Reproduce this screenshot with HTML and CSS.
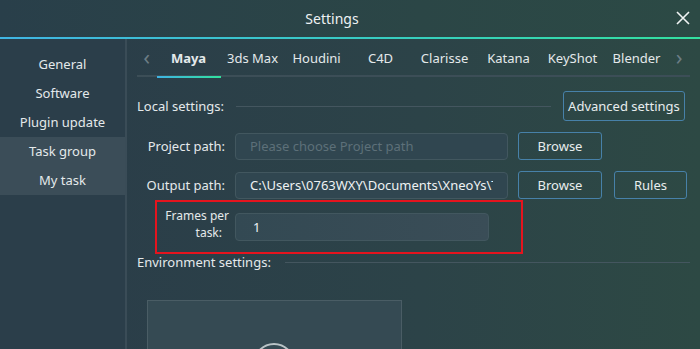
FILE: index.html
```html
<!DOCTYPE html>
<html lang="en">
<head>
    <meta charset="UTF-8">
    <title>Settings</title>
    <link rel="stylesheet" href="styles.css">
</head>
<body>
    <div class="titlebar">
        <span class="title">Settings</span>
        <svg class="close" width="14" height="14" viewBox="0 0 14 14">
            <path d="M1 1 L13 13 M13 1 L1 13" stroke="#f0f3f3" stroke-width="1.6" fill="none"/>
        </svg>
    </div>
    <div class="accent"></div>
    <div class="window">
        <ul class="sidebar">
            <li>General</li>
            <li>Software</li>
            <li>Plugin update</li>
            <li class="active">Task group</li>
            <li class="active">My task</li>
        </ul>
        <div class="main">
            <div class="tabs">
                <span class="arrow">&#x2039;</span>
                <span class="tab selected">Maya</span>
                <span class="tab">3ds Max</span>
                <span class="tab">Houdini</span>
                <span class="tab">C4D</span>
                <span class="tab">Clarisse</span>
                <span class="tab">Katana</span>
                <span class="tab">KeyShot</span>
                <span class="tab">Blender</span>
                <span class="arrow">&#x203A;</span>
            </div>
            <div class="section local">
                <span class="section-title">Local settings:</span>
                <span class="rule short"></span>
                <button class="btn advanced">Advanced settings</button>
            </div>
            <div class="row">
                <label class="label">Project path:</label>
                <input class="field" placeholder="Please choose Project path">
                <button class="btn browse">Browse</button>
            </div>
            <div class="row">
                <label class="label">Output path:</label>
                <input class="field" value="C:\Users\0763WXY\Documents\XneoYs\Task">
                <button class="btn browse">Browse</button>
                <button class="btn rules">Rules</button>
            </div>
            <div class="highlight">
                <label class="label">Frames per<br><span class="tail">task:</span></label>
                <input class="field frames" value="1">
            </div>
            <div class="section env">
                <span class="section-title">Environment settings:</span>
                <span class="rule"></span>
            </div>
            <div class="preview">
                <div class="ring"></div>
            </div>
        </div>
    </div>
</body>
</html>
```

FILE: styles.css
```css
* {
    box-sizing: border-box;
}
html, body {
    margin: 0;
    height: 100%;
    overflow: hidden;
}
body {
    font-family: "Noto Sans", "Open Sans", sans-serif;
    font-size: 13px;
    color: #e4e9eb;
    background: linear-gradient(90deg, #2a3c49 0%, #2c4348 60%, #2d4944 100%);
}
.titlebar {
    height: 37px;
    display: flex;
    align-items: center;
    justify-content: center;
    padding-right: 36px;
    position: relative;
    background: linear-gradient(90deg, #293f4a 0%, #2b4646 60%, #2c4a45 100%);
}
.title {
    font-size: 14px;
    color: #eef2f3;
}
.close {
    position: absolute;
    right: 10px;
    top: 11px;
}
.accent {
    height: 2px;
    background: linear-gradient(90deg, #40b5e3 0%, #38cbc4 50%, #33e0a0 100%);
}
.window {
    display: flex;
    height: calc(100% - 39px);
}
.sidebar {
    list-style: none;
    margin: 0;
    padding: 11px 0 0;
    width: 127px;
    background: #2b3e4a;
    border-right: 2px solid #3a4c57;
}
.sidebar li {
    height: 29px;
    line-height: 29px;
    text-align: center;
}
.sidebar li.active {
    background: #3b4d58;
}
.main {
    flex: 1;
    padding: 0 10px;
    overflow: hidden;
}
.tabs {
    display: flex;
    align-items: center;
    height: 38px;
    border-bottom: 2px solid #3c4e57;
    padding-top: 2px;
    white-space: nowrap;
}
.arrow {
    font-size: 22px;
    color: #6c7d85;
    width: 20px;
    text-align: center;
    margin-top: -4px;
}
.tabs .arrow:last-child {
    width: 22px;
}
.tab {
    width: 64px;
    flex: none;
    text-align: center;
    height: 36px;
    line-height: 36px;
    position: relative;
}
.tab.selected {
    font-weight: bold;
}
.tab.selected::after {
    content: "";
    position: absolute;
    left: 0;
    right: 0;
    bottom: -2px;
    height: 2px;
    background: linear-gradient(90deg, #3fb3e4, #31e29e);
}
.section {
    display: flex;
    align-items: center;
    white-space: nowrap;
}
.local {
    margin-top: 14px;
    height: 30px;
}
.section-title {
    margin-right: 12px;
}
.rule {
    flex: 1;
    height: 1px;
    background: #44565f;
}
.rule.short {
    margin-right: 12px;
    flex: 0 0 315px;
}
.btn {
    font-family: inherit;
    font-size: 13px;
    color: #e8edee;
    background: transparent;
    border: 1px solid #4781a9;
    border-radius: 3px;
    height: 28px;
    padding: 0;
}
.advanced {
    margin-left: auto;
    margin-right: 5px;
    width: 124px;
    height: 30px;
}
.row {
    display: flex;
    align-items: center;
    margin-top: 11px;
}
.label {
    width: 88px;
    text-align: right;
    margin-right: 10px;
    white-space: nowrap;
}
.field {
    font-family: inherit;
    font-size: 13px;
    color: #eef2f3;
    width: 273px;
    height: 27px;
    background: #304650;
    border: 1px solid #42575f;
    border-radius: 4px;
    padding: 0 14px;
    outline: none;
}
.field::placeholder {
    color: #5d7079;
}
.browse {
    width: 84px;
    margin-left: 10px;
}
.rules {
    width: 73px;
    margin-left: 12px;
}
.highlight {
    display: flex;
    align-items: center;
    margin: 1px 0 0 18px;
    width: 368px;
    height: 54px;
    border: 2px solid #e5141e;
}
.highlight .label {
    width: 72px;
    margin-right: 6px;
    margin-top: -5px;
    font-size: 12px;
    line-height: 16.5px;
}
.tail {
    padding-right: 7px;
}
.frames {
    width: 254px;
    height: 28px;
    padding-left: 17px;
    background: linear-gradient(90deg, #334953, #3a4d57);
}
.env {
    height: 16px;
}
.env .section-title {
    margin-right: 14px;
}
.preview {
    margin: 30px 0 0 10px;
    width: 255px;
    height: 80px;
    background: #354a53;
    border: 1px solid #4a5d65;
    position: relative;
    overflow: hidden;
}
.ring {
    position: absolute;
    left: 105px;
    top: 42px;
    width: 42px;
    height: 42px;
    border: 2px solid #b9c3c6;
    border-radius: 50%;
}
```
